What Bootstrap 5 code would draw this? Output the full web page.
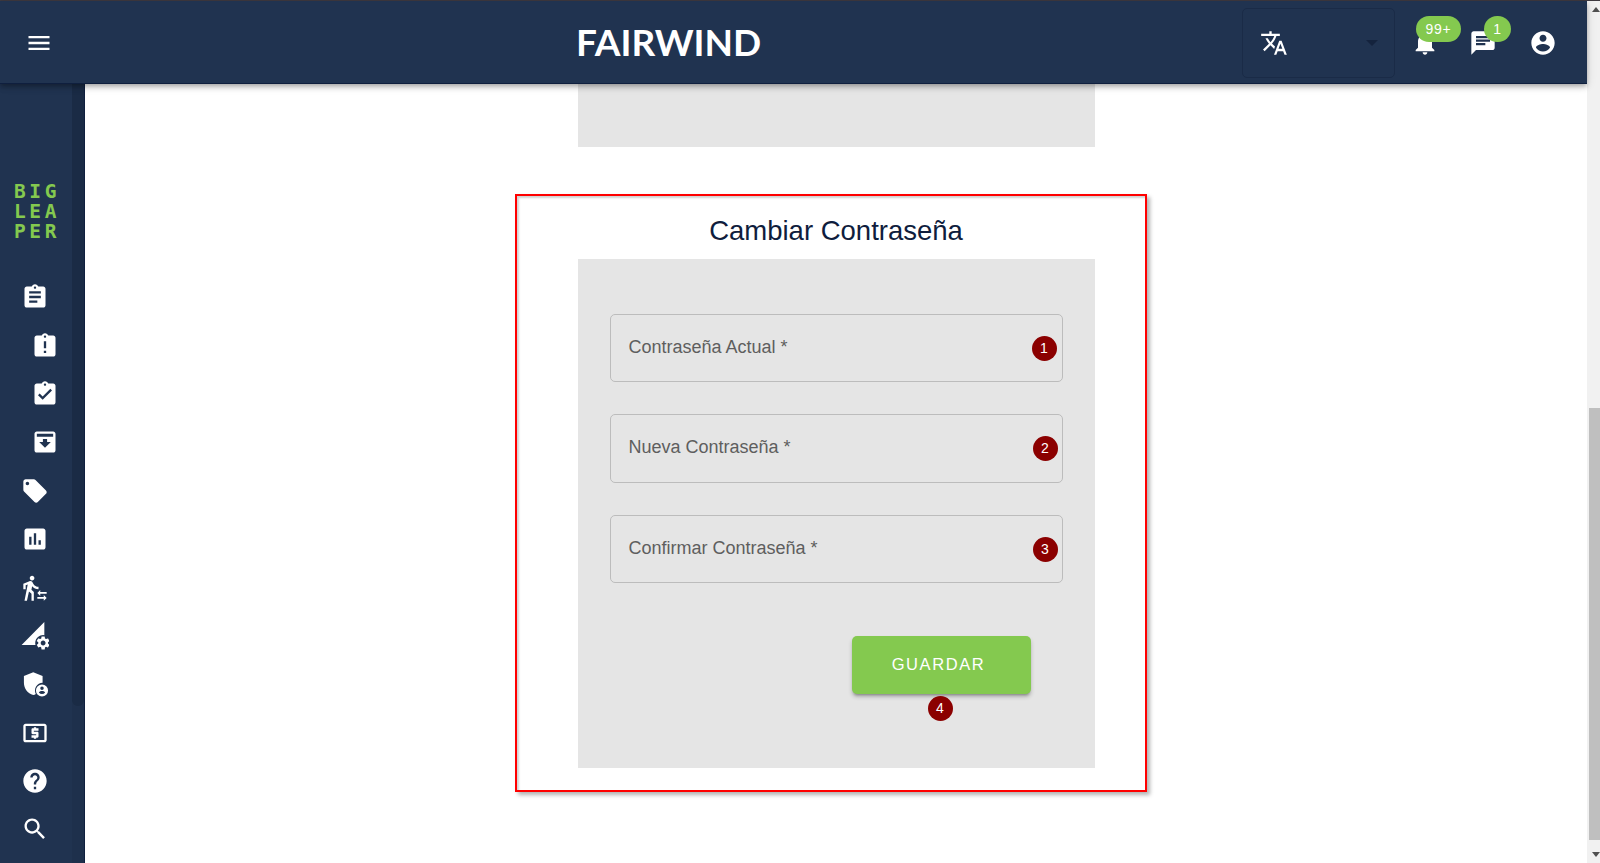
<!DOCTYPE html>
<html lang="es">
<head>
  <meta charset="UTF-8" />
  <meta name="viewport" content="width=device-width, initial-scale=1" />
  <title>Cambiar Contraseña</title>
  <link href="https://cdn.jsdelivr.net/npm/bootstrap@5.3.0/dist/css/bootstrap.min.css" rel="stylesheet" />
  <style>
    html, body { height: 100%; overflow: hidden; }
    body { background: #fff; font-family: "Liberation Sans", Arial, sans-serif; }
    svg { fill: #fff; display: block; }
    .visor { height: 863px; border-top: 1px solid #3f3a40; }
    .cabecera {
      height: 83px; flex: none; background: #203350; border-bottom: 1px solid #0f1f3e; padding-top: 2px;
      box-shadow: 0 2px 4px -1px rgba(0,0,0,.2), 0 4px 5px rgba(0,0,0,.14), 0 1px 10px rgba(0,0,0,.12);
      position: relative; z-index: 5;
    }
    .menu-btn { margin-left: 25px; }
    .marca { font-family: Lato, sans-serif; font-weight: 700; font-size: 37px; color: #fff; margin-left: 523px; margin-bottom: 3px; width: 303px; line-height: 1; }
    .idioma { width: 153px; height: 70px; margin-left: 363px; border: 1px solid #1a2b47; border-radius: 5px; padding: 0 16px 0 17px; }
    .flecha { width: 0; height: 0; border-left: 6px solid transparent; border-right: 6px solid transparent; border-top: 6px solid #14233d; }
    .aviso { position: relative; width: 28px; height: 28px; }
    .aviso-campana { margin-left: 16px; }
    .aviso-chat { margin-left: 30px; }
    .aviso-cuenta { margin-left: 32px; }
    .pastilla {
      position: absolute; top: -13px; height: 26px; background: #84c94f; color: #fff; border-radius: 13px;
      font-size: 14px; letter-spacing: .8px; line-height: 26px; text-align: center; font-weight: 400;
    }
    .pastilla-99 { left: 5px; width: 45px; }
    .pastilla-1 { left: 15px; width: 27px; }
    .lateral { width: 85px; flex: none; background: #203350; border-right: 1px solid #0f1f3e; }
    .lateral-items { width: 72px; padding-top: 97px; }
    .lateral-barra { width: 12px; background: #1e304c; }
    .lateral-thumb { height: 622px; background: #1a2b45; border-radius: 0 0 6px 6px; }
    .logo {
      height: 92px; padding: 1px 0 0 14px; color: #84c94f; font-family: "DejaVu Sans Mono", monospace; font-weight: 700;
      font-size: 19.5px; line-height: 20px; letter-spacing: 3.6px; overflow: hidden;
    }
    .logo span { display: block; height: 20px; line-height: 20px; }
    .fila { height: 48.4px; padding-left: 21px; }
    .fila-sub { padding-left: 31px; }
    .contenido { overflow: hidden; }
    .resto { width: 517px; height: 63px; background: #e5e5e5; flex: none; }
    .recuadro {
      width: 632px; height: 598px; flex: none; margin-top: 47px; margin-right: 11px; border: 2px solid #f00;
      box-shadow: 3px 3px 4px rgba(0,0,0,.3), inset 2px 2px 2px rgba(0,0,0,.18); padding-left: 61px; background: #fff;
    }
    .titulo { width: 517px; height: 63px; margin: 0; font-size: 27.5px; font-weight: 400; color: #0f1d3d; text-align: center; line-height: 70px; font-family: "Liberation Sans", sans-serif; }
    .panel-gris { width: 517px; height: 509px; background: #e5e5e5; padding: 54.5px 32px 0; }
    .campo { position: relative; height: 68.5px; margin-bottom: 32px; }
    .campo .form-control { height: 68.5px; background: transparent; border: 1px solid #bcbcbc; border-radius: 5px; }
    .campo label { position: absolute; left: 19px; top: 21px; font-size: 18px; line-height: 24px; color: #5e5e5e; }
    .numero {
      position: absolute; width: 25px; height: 25px; border-radius: 50%; background: #8b0000; color: #fff;
      font-size: 14px; line-height: 25px; text-align: center; font-weight: 400;
    }
    .numero-campo { top: 22px; right: 5px; }
    .numero-uno { right: 6px; }
    .numero-guardar { left: 76px; top: 60px; }
    .guardar-zona { position: relative; width: 179px; margin-left: 242px; margin-top: 53px; }
    .btn.guardar {
      width: 179px; height: 58px; background: #84c94f; border: 0; border-radius: 5px; color: #fff; font-size: 16.5px;
      letter-spacing: 1.6px; padding: 0 5px 2px 0; box-shadow: 0 3px 3px -2px rgba(0,0,0,.3), 0 3px 4px rgba(0,0,0,.2);
    }
    .scroll-pagina { width: 13px; flex: none; background: #f1f1f1; padding-left: 2px; }
    .scroll-thumb { height: 432px; background: #bfbfbf; margin-top: 392px; }
    .scroll-flecha { height: 15px; padding-left: 3px; }
    .scroll-flecha svg { fill: #505050; }
  </style>
</head>
<body>
  <div class="visor d-flex">
    <div class="d-flex flex-column flex-grow-1">
      <header class="cabecera d-flex align-items-center">
        <div class="menu-btn"><svg width="28" height="28" viewBox="0 0 24 24"><path d="M3 18h18v-2H3v2zm0-5h18v-2H3v2zm0-7v2h18V6H3z"/></svg></div>
        <div class="marca">FAIRWIND</div>
        <div class="idioma d-flex align-items-center justify-content-between">
          <svg width="28" height="28" viewBox="0 0 24 24"><path d="M12.87 15.07l-2.54-2.51.03-.03c1.74-1.94 2.98-4.17 3.71-6.53H17V4h-7V2H8v2H1v1.99h11.17C11.5 7.92 10.44 9.75 9 11.35 8.07 10.32 7.3 9.19 6.69 8h-2c.73 1.63 1.73 3.17 2.98 4.56l-5.09 5.02L4 19l5-5 3.11 3.11.76-2.04zM18.5 10h-2L12 22h2l1.12-3h4.75L21 22h2l-4.5-12zm-2.62 7l1.62-4.33L19.12 17h-3.24z"/></svg>
          <span class="flecha"></span>
        </div>
        <div class="aviso aviso-campana">
          <svg width="28" height="28" viewBox="0 0 24 24"><path d="M12 22c1.1 0 2-.9 2-2h-4c0 1.1.89 2 2 2zm6-6v-5c0-3.07-1.64-5.64-4.5-6.32V4c0-.83-.67-1.5-1.5-1.5s-1.5.67-1.5 1.5v.68C7.63 5.36 6 7.92 6 11v5l-2 2v1h16v-1l-2-2z"/></svg>
          <span class="pastilla pastilla-99">99+</span>
        </div>
        <div class="aviso aviso-chat">
          <svg width="28" height="28" viewBox="0 0 24 24"><path d="M20 2H4c-1.1 0-1.99.9-1.99 2L2 22l4-4h14c1.1 0 2-.9 2-2V4c0-1.1-.9-2-2-2zM6 9h12v2H6V9zm8 5H6v-2h8v2zm4-6H6V6h12v2z"/></svg>
          <span class="pastilla pastilla-1">1</span>
        </div>
        <div class="aviso aviso-cuenta">
          <svg width="28" height="28" viewBox="0 0 24 24"><path d="M12 2C6.48 2 2 6.48 2 12s4.48 10 10 10 10-4.48 10-10S17.52 2 12 2zm0 3c1.66 0 3 1.34 3 3s-1.34 3-3 3-3-1.34-3-3 1.34-3 3-3zm0 14.2c-2.5 0-4.71-1.28-6-3.22.03-1.99 4-3.08 6-3.08 1.99 0 5.97 1.09 6 3.08-1.29 1.94-3.5 3.22-6 3.22z"/></svg>
        </div>
      </header>

      <div class="d-flex flex-grow-1">
        <aside class="lateral d-flex">
          <div class="lateral-items">
            <div class="logo"><span>BIG</span><span>LEA</span><span>PER</span></div>
            <div class="fila d-flex align-items-center"><svg width="28" height="28" viewBox="0 0 24 24"><path d="M19 3h-4.18C14.4 1.84 13.3 1 12 1c-1.3 0-2.4.84-2.82 2H5c-1.1 0-2 .9-2 2v14c0 1.1.9 2 2 2h14c1.1 0 2-.9 2-2V5c0-1.1-.9-2-2-2zm-7 0c.55 0 1 .45 1 1s-.45 1-1 1-1-.45-1-1 .45-1 1-1zm2 14H7v-2h7v2zm3-4H7v-2h10v2zm0-4H7V7h10v2z"/></svg></div>
            <div class="fila fila-sub d-flex align-items-center"><svg width="28" height="28" viewBox="0 0 24 24"><path d="M19 3h-4.18C14.4 1.84 13.3 1 12 1c-1.3 0-2.4.84-2.82 2H5c-1.1 0-2 .9-2 2v14c0 1.1.9 2 2 2h14c1.1 0 2-.9 2-2V5c0-1.1-.9-2-2-2zm-6 15h-2v-2h2v2zm0-4h-2V8h2v6zm-1-9c-.55 0-1-.45-1-1s.45-1 1-1 1 .45 1 1-.45 1-1 1z"/></svg></div>
            <div class="fila fila-sub d-flex align-items-center"><svg width="28" height="28" viewBox="0 0 24 24"><path d="M19 3h-4.18C14.4 1.84 13.3 1 12 1c-1.3 0-2.4.84-2.82 2H5c-1.1 0-2 .9-2 2v14c0 1.1.9 2 2 2h14c1.1 0 2-.9 2-2V5c0-1.1-.9-2-2-2zm-7 0c.55 0 1 .45 1 1s-.45 1-1 1-1-.45-1-1 .45-1 1-1zm-2 14l-4-4 1.41-1.41L10 14.17l6.59-6.59L18 9l-8 8z"/></svg></div>
            <div class="fila fila-sub d-flex align-items-center"><svg width="28" height="28" viewBox="0 0 24 24"><path d="M19 3H5c-1.1 0-2 .9-2 2v14c0 1.1.9 2 2 2h14c1.1 0 2-.9 2-2V5c0-1.1-.9-2-2-2zM5 5h14v2.5H5V5zm7 12l-5-5h3.2V9.5h3.6V12H17l-5 5z"/></svg></div>
            <div class="fila d-flex align-items-center"><svg width="28" height="28" viewBox="0 0 24 24"><path d="M21.41 11.58l-9-9C12.05 2.22 11.55 2 11 2H4c-1.1 0-2 .9-2 2v7c0 .55.22 1.05.59 1.42l9 9c.36.36.86.58 1.41.58.55 0 1.05-.22 1.41-.59l7-7c.37-.36.59-.86.59-1.41 0-.55-.23-1.06-.59-1.42zM5.5 7C4.67 7 4 6.33 4 5.5S4.67 4 5.5 4 7 4.67 7 5.5 6.33 7 5.5 7z"/></svg></div>
            <div class="fila d-flex align-items-center"><svg width="28" height="28" viewBox="0 0 24 24"><path d="M19 3H5c-1.1 0-2 .9-2 2v14c0 1.1.9 2 2 2h14c1.1 0 2-.9 2-2V5c0-1.1-.9-2-2-2zM9 17H7v-7h2v7zm4 0h-2V7h2v10zm4 0h-2v-4h2v4z"/></svg></div>
            <div class="fila d-flex align-items-center"><svg width="28" height="28" viewBox="0 0 24 24"><path d="M16.49 15.5v-1.75L14 16.25l2.49 2.5V17H22v-1.5zm3.02 4.25H14v1.5h5.51V23L22 20.5 19.51 18zM9.5 5.5c1.1 0 2-.9 2-2s-.9-2-2-2-2 .9-2 2 .9 2 2 2zM5.75 8.9L3 23h2.1l1.75-8L9 17v6h2v-7.55L8.95 13.4l.6-3C10.85 12 12.8 13 15 13v-2c-1.85 0-3.45-1-4.35-2.45l-.95-1.6C9.35 6.35 8.7 6 8 6c-.25 0-.5.05-.75.15L2 8.3V13h2V9.65l1.75-.75"/></svg></div>
            <div class="fila d-flex align-items-center"><svg width="28" height="28" viewBox="0 0 24 24"><path d="M.5 19.8 20 0v11.3a6.8 6.8 0 0 0-7.6 8.5z"/><path transform="translate(12 11) scale(.58)" d="M19.14 12.94c.04-.3.06-.61.06-.94 0-.32-.02-.64-.07-.94l2.03-1.58c.18-.14.23-.41.12-.61l-1.92-3.32c-.12-.22-.37-.29-.59-.22l-2.39.96c-.5-.38-1.03-.7-1.62-.94l-.36-2.54c-.04-.24-.24-.41-.48-.41h-3.84c-.24 0-.43.17-.47.41l-.36 2.54c-.59.24-1.13.57-1.62.94l-2.39-.96c-.22-.08-.47 0-.59.22L2.74 8.87c-.12.21-.08.47.12.61l2.03 1.58c-.05.3-.09.63-.09.94s.02.64.07.94l-2.03 1.58c-.18.14-.23.41-.12.61l1.92 3.32c.12.22.37.29.59.22l2.39-.96c.5.38 1.03.7 1.62.94l.36 2.54c.05.24.24.41.48.41h3.84c.24 0 .44-.17.47-.41l.36-2.54c.59-.24 1.13-.56 1.62-.94l2.39.96c.22.08.47 0 .59-.22l1.92-3.32c.12-.22.07-.47-.12-.61l-2.01-1.58zM12 15.6c-1.98 0-3.6-1.62-3.6-3.6s1.62-3.6 3.6-3.6 3.6 1.62 3.6 3.6-1.62 3.6-3.6 3.6z"/></svg></div>
            <div class="fila d-flex align-items-center"><svg width="28" height="28" viewBox="0 0 24 24"><path d="M10.5 2 2.5 5.2V11c0 4.8 3.2 9.2 8 10.5.8-.2 1.5-.5 2.2-1A6.6 6.6 0 0 1 18.5 10.9V5.2z"/><path fill-rule="evenodd" d="M18 12.4a5.2 5.2 0 1 0 0 10.4 5.2 5.2 0 0 0 0-10.4zm0 1.8a1.5 1.5 0 1 1 0 3 1.5 1.5 0 0 1 0-3zm0 3.8c1.2 0 2.6.5 2.7 1.3a3.4 3.4 0 0 1-5.4 0c.1-.8 1.5-1.3 2.7-1.3z"/></svg></div>
            <div class="fila d-flex align-items-center"><svg width="28" height="28" viewBox="0 0 24 24"><path d="M11 17h2v-1h1c.55 0 1-.45 1-1v-3c0-.55-.45-1-1-1h-3v-1h4V8h-2V7h-2v1h-1c-.55 0-1 .45-1 1v3c0 .55.45 1 1 1h3v1H9v2h2v1zm9-13H4c-1.11 0-1.99.89-1.99 2L2 18c0 1.11.89 2 2 2h16c1.11 0 2-.89 2-2V6c0-1.11-.89-2-2-2zm0 14H4V6h16v12z"/></svg></div>
            <div class="fila d-flex align-items-center"><svg width="28" height="28" viewBox="0 0 24 24"><path d="M12 2C6.48 2 2 6.48 2 12s4.48 10 10 10 10-4.48 10-10S17.52 2 12 2zm1 17h-2v-2h2v2zm2.07-7.75l-.9.92C13.45 12.9 13 13.5 13 15h-2v-.5c0-1.1.45-2.1 1.17-2.83l1.24-1.26c.37-.36.59-.86.59-1.41 0-1.1-.9-2-2-2s-2 .9-2 2H8c0-2.21 1.79-4 4-4s4 1.79 4 4c0 .88-.36 1.68-.93 2.25z"/></svg></div>
            <div class="fila d-flex align-items-center"><svg width="28" height="28" viewBox="0 0 24 24"><path d="M15.5 14h-.79l-.28-.27C15.41 12.59 16 11.11 16 9.5 16 5.91 13.09 3 9.5 3S3 5.91 3 9.5 5.91 16 9.5 16c1.61 0 3.09-.59 4.23-1.57l.27.28v.79l5 4.99L20.49 19l-4.99-5zm-6 0C7.01 14 5 11.99 5 9.5S7.01 5 9.5 5 14 7.01 14 9.5 11.99 14 9.5 14z"/></svg></div>
          </div>
          <div class="lateral-barra"><div class="lateral-thumb"></div></div>
        </aside>

        <main class="contenido flex-grow-1 d-flex flex-column align-items-center">
          <div class="resto"></div>
          <section class="recuadro">
            <h1 class="titulo">Cambiar Contraseña</h1>
            <div class="panel-gris">
              <form>
                <div class="campo">
                  <input class="form-control" type="password" id="actual" />
                  <label for="actual">Contraseña Actual *</label>
                  <span class="numero numero-campo numero-uno">1</span>
                </div>
                <div class="campo">
                  <input class="form-control" type="password" id="nueva" />
                  <label for="nueva">Nueva Contraseña *</label>
                  <span class="numero numero-campo">2</span>
                </div>
                <div class="campo">
                  <input class="form-control" type="password" id="confirmar" />
                  <label for="confirmar">Confirmar Contraseña *</label>
                  <span class="numero numero-campo">3</span>
                </div>
                <div class="guardar-zona">
                  <button type="button" class="btn guardar">GUARDAR</button>
                  <span class="numero numero-guardar">4</span>
                </div>
              </form>
            </div>
          </section>
        </main>
      </div>
    </div>

    <div class="scroll-pagina d-flex flex-column">
      <div class="scroll-flecha"><svg width="8" height="15" viewBox="0 0 8 15"><path d="M0 11 4 6l4 5z"/></svg></div>
      <div class="scroll-thumb"></div>
      <div class="flex-grow-1"></div>
      <div class="scroll-flecha"><svg width="8" height="15" viewBox="0 0 8 15"><path d="M0 4h8L4 9z"/></svg></div>
    </div>
  </div>
</body>
</html>
